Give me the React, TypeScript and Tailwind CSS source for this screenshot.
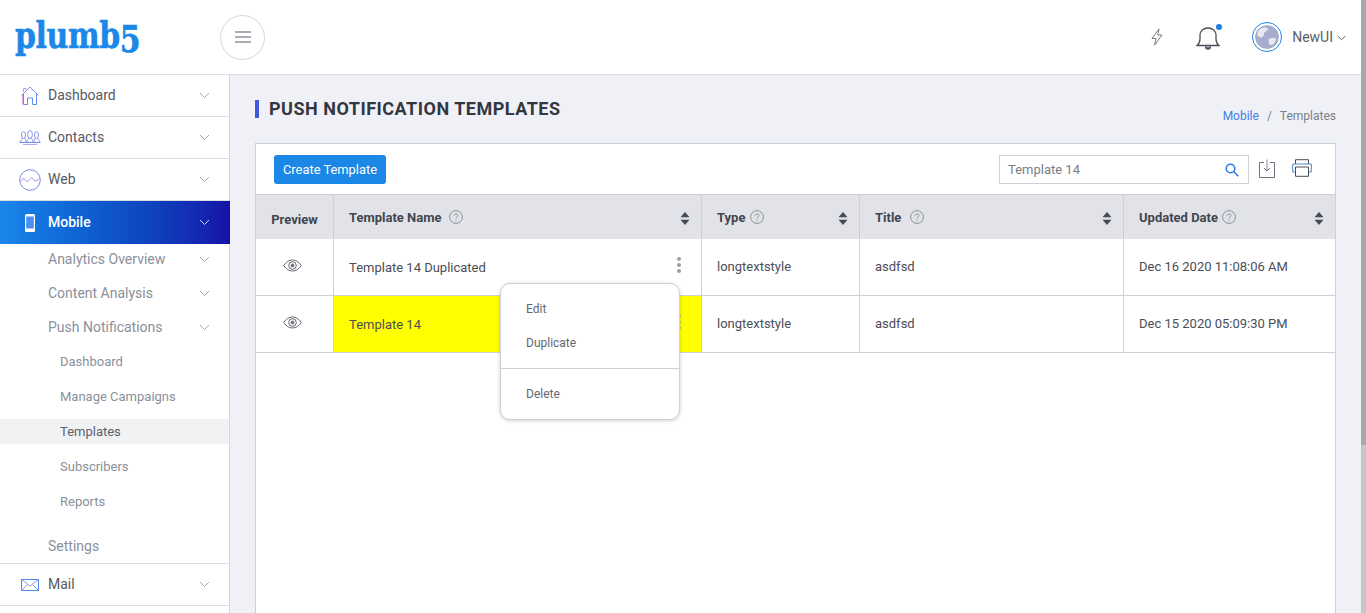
import React from "react";

const Chevron = ({ white = false }: { white?: boolean }) => (
  <svg width="11" height="7" viewBox="0 0 11 7" className="shrink-0" fill="none" stroke={white ? "#c9d2f5" : "#a3a7ae"} strokeWidth="1">
    <path d="M1 1l4.500 4.500L10 1" />
  </svg>
);

const HomeIcon = () => (
  <svg width="18" height="19" viewBox="0 0 18 19" fill="none" strokeWidth="1">
    <path d="M.5 9.500 9 1l8.500 8.500" stroke="#8d8ff0" />
    <path d="M2.500 8v10.500H6.500V12h5v6.500h4V8" stroke="#5f8ef0" />
    <path d="M2.500 6V2.500h2.500V4" stroke="#d08fe8" />
    <path d="M1.500 9v9.500" stroke="#e6a3ea" />
  </svg>
);
const ContactsIcon = () => (
  <svg width="22" height="15" viewBox="0 0 22 15" fill="none" stroke="#8a90ec" strokeWidth="1">
    <ellipse cx="4.500" cy="5" rx="2" ry="3.500" />
    <ellipse cx="11" cy="4.500" rx="2.400" ry="4" />
    <ellipse cx="17.500" cy="5" rx="2" ry="3.500" />
    <path d="M1 12c1-2 2-3 2.500-4M8 12c0-2 1-3 2-4M14 12c0-2-1-3-2-4M21 12c-1-2-2-3-2.500-4M5.500 8c.5 1 1.500 2 1.500 4M16.500 8c-.5 1-1.500 2-1.500 4" />
    <path d="M.5 12.500h21" stroke="#6f8ef0" />
    <path d="M4 14.500h14" stroke="#a8b0f0" />
  </svg>
);
const WebIcon = () => (
  <svg width="22" height="22" viewBox="0 0 22 22" fill="none" stroke="#7a8df0" strokeWidth="1">
    <circle cx="11" cy="11" r="10.300" />
    <path d="M1.500 12.500c2-3 3.500-3.500 5-1.500s2.500 2 4-.5 3-2 4 0 3.500 1.500 6-1" stroke="#9a86e8" />
  </svg>
);
const PhoneIcon = () => (
  <svg width="10" height="18" viewBox="0 0 10 18">
    <rect x="0" y="0" width="10" height="18" rx="1.500" fill="#fff" />
    <rect x="1.200" y="2.500" width="7.600" height="12" fill="#4c8df0" />
  </svg>
);
const MailIcon = () => (
  <svg width="18" height="12" viewBox="0 0 18 12" fill="none" stroke="#4f86ef" strokeWidth="1">
    <rect x="0.500" y="0.500" width="17" height="11" />
    <path d="M0.500 0.500 9 7l8.500-6.500M0.500 11.500 6.500 5.500M17.500 11.500l-6-6" stroke="#8a96e8" />
  </svg>
);

const Help = () => (
  <svg width="14" height="14" viewBox="0 0 14 14" fill="none" className="shrink-0">
    <circle cx="7" cy="7" r="6.400" stroke="#777c84" strokeWidth="0.800" />
    <path d="M5.100 5.600c0-1.100.8-1.800 1.900-1.800s1.900.7 1.900 1.700c0 1.400-1.900 1.400-1.900 2.900" stroke="#777c84" strokeWidth="0.800" />
    <circle cx="7" cy="10.200" r="0.550" fill="#777c84" />
  </svg>
);

const Sort = () => (
  <svg width="10" height="13" viewBox="0 0 10 13" className="shrink-0">
    <path d="M5 0l4.500 5.300H.500zM5 13 .500 7.700h9z" fill="#454a54" />
  </svg>
);

const Eye = () => (
  <svg width="19" height="13" viewBox="0 0 19 13" fill="none" stroke="#555a62" strokeWidth="0.900">
    <path d="M.7 6.500C3 3 6 1 9.500 1s6.500 2 8.800 5.500C16 10 13 12 9.500 12S3 10 .7 6.500z" />
    <circle cx="9.500" cy="6.500" r="3.800" />
    <circle cx="9.500" cy="6.500" r="1.900" fill="#777c84" stroke="none" />
  </svg>
);

const Kebab = ({ faded = false }: { faded?: boolean }) => (
  <div className="flex flex-col gap-[2px] shrink-0">
    <span className={`w-1 h-1 rounded-full ${faded ? "bg-[#c5c56a]" : "bg-[#9b9ea6]"}`} />
    <span className={`w-1 h-1 rounded-full ${faded ? "bg-[#c5c56a]" : "bg-[#9b9ea6]"}`} />
    <span className={`w-1 h-1 rounded-full ${faded ? "bg-[#c5c56a]" : "bg-[#9b9ea6]"}`} />
  </div>
);

const Row = ({ icon, label }: { icon: React.ReactNode; label: string }) => (
  <div className="h-[42px] flex items-center border-b border-[#dcdde2] pr-[19px]">
    <div className="w-[48px] flex items-center justify-center pl-[12px] shrink-0">{icon}</div>
    <span className="flex-1 text-[14px] text-[#555a64]">{label}</span>
    <Chevron />
  </div>
);

const Sub = ({ label, first }: { label: string; first?: boolean }) => (
  <div className={`h-[34px] flex items-center pl-[48px] pr-[19px] ${first ? "-mt-[2px]" : ""}`}>
    <span className="flex-1 text-[14px] text-[#8b909b]">{label}</span>
    <Chevron />
  </div>
);

const Sub2 = ({ label, active }: { label: string; active?: boolean }) => (
  <div className={`h-[25px] mb-[10px] flex items-center pl-[60px] text-[13px] ${active ? "bg-[#f1f2f4] text-[#5c6069]" : "text-[#8b909b]"}`}>
    {label}
  </div>
);

const HeadLabel = ({ label, gap }: { label: string; gap: string }) => (
  <>
    <span className={`text-[13px] font-bold text-[#42464f] mt-[2px] ${gap}`}>{label}</span>
    <Help />
    <span className="flex-1" />
    <span className="mt-[2px]"><Sort /></span>
  </>
);

const Head = ({ label, w, gap }: { label: string; w: string; gap: string }) => (
  <div className={`${w} h-[44px] flex items-center pl-[15px] pr-[11px] border-r border-[#ccd0d8] shrink-0`}>
    <HeadLabel label={label} gap={gap} />
  </div>
);

const TableRow = ({ name, type, title, date, highlight, menuFaded }: { name: string; type: string; title: string; date: string; highlight?: boolean; menuFaded?: boolean }) => (
  <div className="flex h-[57px] border-b border-[#ccd0d8] text-[13px] text-[#4a4e57]">
    <div className="w-[78px] shrink-0 border-r border-[#ccd0d8] flex justify-center pt-[20px] pr-[4px]"><Eye /></div>
    <div className={`w-[368px] shrink-0 border-r border-[#ccd0d8] flex items-center pl-[15px] pr-[20px] ${highlight ? "bg-[#ffff00]" : ""}`}>
      <span className="flex-1 mt-[2px]">{name}</span>
      <span className="-mt-[4px]"><Kebab faded={menuFaded} /></span>
    </div>
    <div className="w-[158px] shrink-0 border-r border-[#ccd0d8] flex items-center pl-[15px]">{type}</div>
    <div className="w-[264px] shrink-0 border-r border-[#ccd0d8] flex items-center pl-[15px]">{title}</div>
    <div className="flex-1 flex items-center pl-[15px]">{date}</div>
  </div>
);

export default function App() {
  return (
    <div className="h-[613px] w-[1366px] overflow-hidden flex bg-[#f0f1f6] font-['Roboto',sans-serif]">
      <div className="w-[1361px] flex flex-col shrink-0">
        <header className="h-[75px] shrink-0 bg-white border-b border-[#dcdde2] flex items-center">
          <div className="w-[220px] shrink-0 pl-[15px] -mt-[4px]">
            <div className="origin-left scale-x-[0.81] font-['DejaVu_Serif',serif] font-bold text-[#1b87e6] text-[37px] leading-none tracking-[-0.5px] whitespace-nowrap [-webkit-text-stroke:0.6px_#1b87e6]">
              plumb<span className="inline-block translate-y-[4px]">5</span>
            </div>
          </div>
          <button className="w-[45px] h-[45px] rounded-full border border-[#d4d7dc] flex flex-col items-center justify-center gap-[3px]">
            <span className="w-4 h-[2px] bg-[#a8adb5]" />
            <span className="w-4 h-[2px] bg-[#a8adb5]" />
            <span className="w-4 h-[2px] bg-[#a8adb5]" />
          </button>
          <div className="flex-1" />
          <svg width="12" height="18" viewBox="0 0 12 18" fill="none" stroke="#777c84" strokeWidth="1" className="mr-[33px]">
            <path d="M8 .800 1 10.500h4l-1.500 6.700L11 7H6.800z" />
          </svg>
          <div className="relative mr-[32px]">
            <svg width="24" height="25" viewBox="0 0 24 25" fill="none" stroke="#4a4e57" strokeWidth="1.300">
              <path d="M1 20.500c2-1.500 3-3 3-6.500V10c0-4 3.500-7 8-7s8 3 8 7v4c0 3.500 1 5 3 6.500z" />
              <path d="M9.500 21.500c0 1.500 1 2.500 2.500 2.500s2.500-1 2.500-2.500" fill="#777c84" />
            </svg>
            <span className="absolute -top-[1px] right-[-2px] w-[6px] h-[6px] rounded-full bg-[#1b7fe6]" />
          </div>
          <div className="w-[30px] h-[30px] rounded-full border border-[#1b87e6] p-[2px] mr-[10px]">
            <svg viewBox="0 0 24 24" className="w-full h-full rounded-full">
              <circle cx="12" cy="12" r="12" fill="#a7adce" />
              <path d="M4 5c3-3 7-3 9-1-1 3-4 2-4 5s-3 4-5 3-2-5 0-7zM14 14c3-2 6-1 7 0-1 4-3 6-5 6s-3-4-2-6z" fill="#e6e8f2" />
            </svg>
          </div>
          <span className="text-[14px] text-[#5a5e68] mr-[4px] mt-[1px]">NewUI</span>
          <svg width="9" height="6" viewBox="0 0 9 6" fill="none" stroke="#5a5e68" strokeWidth="1" className="mr-[15px] mt-[1px]">
            <path d="M.7 1l3.800 3.800L8.300 1" />
          </svg>
        </header>
        <div className="flex flex-1 min-h-0">
          <aside className="w-[230px] shrink-0 bg-white border-r border-[#d5d7dd]">
            <Row icon={<HomeIcon />} label="Dashboard" />
            <Row icon={<ContactsIcon />} label="Contacts" />
            <Row icon={<WebIcon />} label="Web" />
            <div className="h-[43px] -mr-px flex items-center pr-[19px] bg-gradient-to-r from-[#1a86ea] to-[#1610a8]">
              <div className="w-[48px] flex items-center justify-center pl-[12px] shrink-0"><PhoneIcon /></div>
              <span className="flex-1 text-[14px] font-medium text-white">Mobile</span>
              <span className="mr-px"><Chevron white /></span>
            </div>
            <Sub label="Analytics Overview" first />
            <Sub label="Content Analysis" />
            <Sub label="Push Notifications" />
            <div className="h-[5px]" />
            <Sub2 label="Dashboard" />
            <Sub2 label="Manage Campaigns" />
            <Sub2 label="Templates" active />
            <Sub2 label="Subscribers" />
            <Sub2 label="Reports" />
            <div className="h-[40px] flex items-center pl-[48px] pt-[5px] border-b border-[#dcdde2] text-[14px] text-[#8b909b]">Settings</div>
            <Row icon={<MailIcon />} label="Mail" />
          </aside>
          <main className="flex-1 min-w-0 pl-[25px] pr-[25px] overflow-hidden">
            <div className="h-[68px] flex items-start pt-[25px]">
              <span className="w-1 h-[18px] bg-[#4259d8] mr-[10px]" />
              <h1 className="text-[18px] leading-[18px] font-bold text-[#33373f] tracking-[0.5px] flex-1">PUSH NOTIFICATION TEMPLATES</h1>
              <div className="text-[12px] mt-[7px] text-[#7a7e87]">
                <span className="text-[#3f7ee6]">Mobile</span>
                <span className="mx-[8px]">/</span>
                <span>Templates</span>
              </div>
            </div>
            <div className="relative bg-white border border-[#ccd0d8] h-[480px]">
              <div className="h-[51px] flex items-center border-b border-[#ccd0d8] pl-[18px] pr-[23px]">
                <button className="h-[29px] mt-[1px] w-[112px] rounded-[3px] bg-[#1b87e6] text-white text-[12.9px]">Create Template</button>
                <div className="flex-1" />
                <div className="w-[250px] h-[29px] mt-[1px] border border-[#ccd0d8] flex items-center pl-[8px] pr-[9px] text-[13px] text-[#7a7e87]">
                  <span className="flex-1">Template 14</span>
                  <svg width="14" height="14" viewBox="0 0 14 14" fill="none" stroke="#2a7de0" strokeWidth="1.600">
                    <circle cx="5.500" cy="5.500" r="4.300" />
                    <path d="m8.800 8.800 4.500 4.500" />
                  </svg>
                </div>
                <svg width="16" height="19" viewBox="0 0 16 19" fill="none" stroke="#5e626b" strokeWidth="0.900" className="ml-[10px] -mt-[2px]">
                  <path d="M5 3.500H.5v15h15v-15H11" />
                  <path d="M8 .500v11" stroke="#8c6fa8" />
                  <path d="m5 9 3 3 3-3" />
                </svg>
                <svg width="20" height="18" viewBox="0 0 20 18" fill="none" stroke="#4a4e57" strokeWidth="1" className="ml-[17px] -mt-[3px]">
                  <path d="M3.500 5V.7h13V5" />
                  <path d="M3.500 13H.7V5h18.600v8h-2.800" stroke="#4f86c6" />
                  <path d="M3.500 8h13v9.300h-13z" />
                </svg>
              </div>
              <div className="flex bg-[#e2e3e8]">
                <div className="w-[78px] h-[44px] shrink-0 border-r border-[#ccd0d8] flex items-center justify-center pt-[6px]">
                  <span className="text-[13px] font-bold text-[#42464f]">Preview</span>
                </div>
                <Head label="Template Name" w="w-[368px]" gap="mr-[7px]" />
                <Head label="Type" w="w-[158px]" gap="mr-[5px]" />
                <Head label="Title" w="w-[264px]" gap="mr-[9px]" />
                <div className="flex-1 min-w-0 h-[44px] flex items-center pl-[15px] pr-[11px]">
                  <HeadLabel label="Updated Date" gap="mr-[4px]" />
                </div>
              </div>
              <TableRow name="Template 14 Duplicated" type="longtextstyle" title="asdfsd" date="Dec 16 2020 11:08:06 AM" />
              <TableRow name="Template 14" type="longtextstyle" title="asdfsd" date="Dec 15 2020 05:09:30 PM" highlight menuFaded />
              <div className="absolute left-[244px] top-[139px] w-[180px] h-[137px] bg-white border border-[#ccd0d8] rounded-[10px] shadow-[0_1px_4px_rgba(0,0,0,0.18)] text-[12px] text-[#646872]">
                <div className="h-[34px] mt-[8px] flex items-center pl-[25px]">Edit</div>
                <div className="h-[34px] flex items-center pl-[25px]">Duplicate</div>
                <div className="border-t border-[#ccd0d8] mt-[8px]" />
                <div className="h-[34px] mt-[8px] flex items-center pl-[25px]">Delete</div>
              </div>
            </div>
          </main>
        </div>
      </div>
      <div className="flex-1 flex flex-col bg-[#c6c6ca]">
        <div className="h-[445px] bg-[#a8a8a8]" />
      </div>
    </div>
  );
}
